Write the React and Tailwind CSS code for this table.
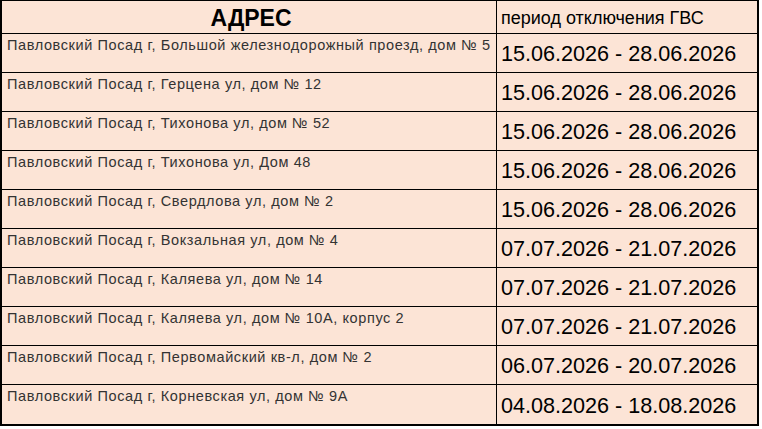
const rows = [
  ['Павловский Посад г, Большой железнодорожный проезд, дом № 5', '15.06.2026 - 28.06.2026'],
  ['Павловский Посад г, Герцена ул, дом № 12', '15.06.2026 - 28.06.2026'],
  ['Павловский Посад г, Тихонова ул, дом № 52', '15.06.2026 - 28.06.2026'],
  ['Павловский Посад г, Тихонова ул, Дом 48', '15.06.2026 - 28.06.2026'],
  ['Павловский Посад г, Свердлова ул, дом № 2', '15.06.2026 - 28.06.2026'],
  ['Павловский Посад г, Вокзальная ул, дом № 4', '07.07.2026 - 21.07.2026'],
  ['Павловский Посад г, Каляева ул, дом № 14', '07.07.2026 - 21.07.2026'],
  ['Павловский Посад г, Каляева ул, дом № 10А, корпус 2', '07.07.2026 - 21.07.2026'],
  ['Павловский Посад г, Первомайский кв-л, дом № 2', '06.07.2026 - 20.07.2026'],
  ['Павловский Посад г, Корневская ул, дом № 9А', '04.08.2026 - 18.08.2026'],
]

export default function App() {
  return (
    <div className="h-[429px] w-[762px] bg-white font-['Liberation_Sans',Arial,sans-serif]">
      <div className="w-[759px] border-x-2 border-b-2 border-t border-black bg-[#fce4d6]">
        <div className="grid h-[33px] grid-cols-[495px_1fr] border-b border-black">
          <div className="flex items-center justify-center border-r border-black pl-[4px] text-[23px] font-bold text-black">
            АДРЕС
          </div>
          <div className="flex items-center pl-[4px] text-[18px] text-black">период отключения ГВС</div>
        </div>
        {rows.map(([addr, period], i) => (
          <div
            key={i}
            className={`grid h-[39px] grid-cols-[495px_1fr] ${i < rows.length - 1 ? 'border-b border-black' : ''}`}
          >
            <div className="whitespace-nowrap border-r border-black pl-[5px] pt-[3px] text-[14.5px] leading-[16px] tracking-[0.6px] text-[#333]">
              {addr}
            </div>
            <div className="flex items-center pl-[4px] pt-[3px] text-[21.6px] text-black">{period}</div>
          </div>
        ))}
      </div>
    </div>
  )
}
